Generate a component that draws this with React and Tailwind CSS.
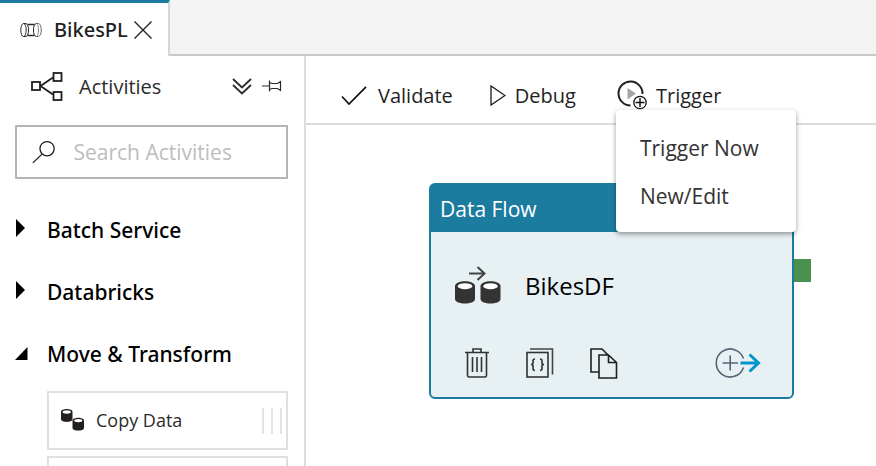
import React from "react";

function PipelineIcon() {
  return (
    <svg width="22" height="16" viewBox="0 0 22 16" fill="none" stroke="#2b2b2b">
      <ellipse cx="3.5" cy="8" rx="2.700" ry="6.500" />
      <path d="M3.500 1.500H6C8 2.500 8.500 5 8.500 8s-.5 5.500-2.500 6.500H3.500" />
      <path d="M7.500 2.500h7M7.500 13.500h7" strokeWidth="1.500" />
      <path d="M16 1.500c-2 1-2.500 3.500-2.500 6.500s.5 5.500 2.500 6.500" />
      <path d="M15.500 1.500h3c2 .5 2.800 3.500 2.800 6.500s-.8 6-2.800 6.500h-3" stroke="#666" />
      <path d="M16.500 1.500c1.500 1 2 3.500 2 6.500s-.5 5.500-2 6.500" stroke="#888" />
    </svg>
  );
}

function CloseIcon() {
  return (
    <svg width="18" height="18" viewBox="0 0 18 18" fill="none" stroke="#1f1f1f" strokeWidth="1.300">
      <path d="M.5.5l17 17M17.500.5l-17 17" />
    </svg>
  );
}

function ActivitiesIcon() {
  return (
    <svg width="32" height="30" viewBox="0 0 32 30" fill="none" stroke="#1f1f1f" strokeWidth="1.800">
      <rect x="1" y="10" width="8" height="8" />
      <rect x="22.500" y="1" width="8" height="8" />
      <rect x="22.500" y="20" width="8" height="8" />
      <path d="M22 5.500L9.500 14L22 22.500" />
    </svg>
  );
}

function CollapseIcon() {
  return (
    <svg width="20" height="18" viewBox="0 0 20 18" fill="none" stroke="#2b2b2b" strokeWidth="1.800">
      <path d="M1 1l9 8.500L19 1M1 7l9 8.500 9-8.500" />
    </svg>
  );
}

function PinIcon() {
  return (
    <svg width="20" height="14" viewBox="0 0 20 14" fill="none" stroke="#2b2b2b" strokeWidth="1.200">
      <path d="M0 6H7.500M7.500.5v11M7.500 2.500L10 3.500h5.500L18.500 1.500v9L15.500 8.500H10L7.500 9.500" />
    </svg>
  );
}

function SearchIcon() {
  return (
    <svg width="28" height="28" viewBox="0 0 28 28" fill="none" stroke="#1a1a1a" strokeWidth="1.500">
      <circle cx="18" cy="10" r="8.500" />
      <path d="M12 16.500L1 27" />
    </svg>
  );
}

function Cylinder({ x, y, fill }) {
  return (
    <g transform={`translate(${x} ${y})`}>
      <path d="M0 5C0-1.500 20-1.500 20 5V18c0 6-20 6-20 0z" fill={fill} />
      <ellipse cx="10" cy="5.200" rx="7.200" ry="3" fill="#fff" />
    </g>
  );
}

function CopyDataIcon() {
  return (
    <svg width="23" height="23" viewBox="0 0 40 40">
      <Cylinder x="0" y="0" fill="#231f20" />
      <Cylinder x="20" y="15" fill="#231f20" />
    </svg>
  );
}

function DataFlowIcon() {
  return (
    <svg width="46" height="40" viewBox="0 0 46 40">
      <path d="M14 7.500h16M22.500 1l7 6.500-7 6.500" fill="none" stroke="#444" strokeWidth="2" />
      <Cylinder x="0" y="15" fill="#333" />
      <Cylinder x="25.500" y="15" fill="#333" />
    </svg>
  );
}

function CheckIcon() {
  return (
    <svg width="26" height="20" viewBox="0 0 26 20" fill="none" stroke="#111" strokeWidth="1.700">
      <path d="M1 10.500l7 7.500L25 .8" />
    </svg>
  );
}

function PlayIcon() {
  return (
    <svg width="16" height="22" viewBox="0 0 16 22" fill="none" stroke="#1a1a1a" strokeWidth="1.300">
      <path d="M1 1v19L15 10.500z" />
    </svg>
  );
}

function TriggerIcon() {
  return (
    <svg width="32" height="32" viewBox="0 0 32 32" fill="none">
      <path d="M14.500 25.500A12 12 0 1 1 26.500 14" stroke="#222" strokeWidth="2" />
      <path d="M11.500 8v11.500l8.500-6z" fill="#a6a6a6" />
      <circle cx="24" cy="22.500" r="6.200" fill="#fff" stroke="#111" strokeWidth="1.300" />
      <path d="M19.500 22.500h9M24 18v9" stroke="#111" strokeWidth="1.400" />
    </svg>
  );
}

function TrashIcon() {
  return (
    <svg width="26" height="30" viewBox="0 0 26 30" fill="none" stroke="#333" strokeWidth="1.600">
      <path d="M1 4.500h24M9 4V1h8v3M3.500 5v22.500q0 1.500 1.500 1.500h16q1.500 0 1.500-1.500V5M8.500 9v15M13 9v15M17.500 9v15" />
    </svg>
  );
}

function CodeIcon() {
  return (
    <svg width="28" height="30" viewBox="0 0 28 30" fill="none" stroke="#333" strokeWidth="1.600">
      <rect x="1" y="4.500" width="21" height="24.500" />
      <path d="M4 1h22.500v25.500" stroke="#444" />
      <path d="M9 11q-2 0-2 2v2q0 1.500-2 1.500 2 0 2 1.500v2.500q0 2 2 2M14 11q2 0 2 2v2q0 1.500 2 1.500-2 0-2 1.500v2.500q0 2-2 2" />
    </svg>
  );
}

function CopyIcon() {
  return (
    <svg width="28" height="31" viewBox="0 0 28 31" fill="none" stroke="#1f1f1f" strokeWidth="1.600">
      <path d="M9 24H1V1h11l6 6M9 7h9.500l8 7.500V30H9zM18.500 7v7.500h8" />
    </svg>
  );
}

function AddOutputIcon() {
  return (
    <svg width="47" height="32" viewBox="0 0 47 32" fill="none">
      <path d="M28.500 11.500A14 14 0 1 0 28.500 20.500" stroke="#5b6376" strokeWidth="1.600" />
      <path d="M7.500 16H23M15.200 8.500v15" stroke="#5b6376" strokeWidth="1.600" />
      <path d="M25.500 16H44M34.500 7.500l9 8.500-9 8.500" stroke="#0095cb" strokeWidth="3" />
    </svg>
  );
}

function Group({ label, open, children }) {
  return (
    <section>
      <button
        type="button"
        aria-expanded={open}
        className="flex h-[62px] w-full items-center text-left font-['Noto_Sans',sans-serif] text-[21px] font-medium text-black"
      >
        <span className="flex h-6 w-8 items-start">
          {open ? (
            <svg width="13" height="19" viewBox="0 0 13 19">
              <path d="M12.500 4v13H0z" />
            </svg>
          ) : (
            <svg width="10" height="19" viewBox="0 0 10 19">
              <path d="M1 0v18l9-9z" />
            </svg>
          )}
        </span>
        {label}
      </button>
      {children}
    </section>
  );
}

function ToolButton({ icon, label, className }) {
  return (
    <button type="button" className={`flex items-center text-[20px] text-[#1f1f1f] ${className}`}>
      {icon}
      {label}
    </button>
  );
}

export default function App() {
  return (
    <div className="flex h-screen flex-col overflow-hidden bg-white font-['Open_Sans',sans-serif] text-[#2b2b2b]">
      <header className="flex h-14 shrink-0">
        <div className="flex w-[170px] shrink-0 items-center border-t-[3px] border-r-2 border-t-[#1b7ca0] border-r-[#d6d6d6] pl-5">
          <PipelineIcon />
          <span className="ml-3 font-['Noto_Sans',sans-serif] text-[20px] font-medium text-[#1f1f1f]">BikesPL</span>
          <button type="button" aria-label="Close tab" className="ml-1.5">
            <CloseIcon />
          </button>
        </div>
        <div className="grow border-b-2 border-[#c8c8c8] bg-[#f3f3f3]" />
      </header>

      <div className="flex min-h-0 grow">
        <aside className="w-[306px] shrink-0 overflow-hidden border-r-2 border-[#dcdcdc] pr-4 pl-[15px]">
          <div className="flex h-[69px] items-center pb-2 pl-4">
            <ActivitiesIcon />
            <h2 className="ml-4 grow text-[20px]">Activities</h2>
            <button type="button" aria-label="Collapse all">
              <CollapseIcon />
            </button>
            <button type="button" aria-label="Pin" className="mr-1.5 ml-2.5">
              <PinIcon />
            </button>
          </div>

          <label className="flex h-[54px] items-center border-2 border-[#b5b5b5] pl-[15px]">
            <SearchIcon />
            <input
              type="text"
              aria-label="Search Activities"
              placeholder="Search Activities"
              className="ml-[18px] w-full min-w-0 pt-0.5 text-[21px] outline-none placeholder:text-[#bdbdbd]"
            />
          </label>

          <div className="pt-[21px]">
            <Group label="Batch Service" />
            <Group label="Databricks" />
            <Group label="Move & Transform" open>
              <div className="mt-[5px] ml-8 flex flex-col gap-1.5">
                <div className="flex h-[59px] items-center border-2 border-[#e0e0e0] pr-1 pl-3 text-[18px]">
                  <CopyDataIcon />
                  <span className="ml-3 grow">Copy Data</span>
                  <span className="flex h-[26px] w-5 justify-between border-x-2 border-[#e3e3e3]">
                    <span className="mx-auto w-0.5 bg-[#e3e3e3]" />
                  </span>
                </div>
                <div className="h-[59px] border-2 border-[#e0e0e0]" />
              </div>
            </Group>
          </div>
        </aside>

        <main className="flex min-w-0 grow flex-col">
          <div className="flex h-[69px] shrink-0 items-center border-b-2 border-[#dcdcdc] pt-3 pl-[35px]">
            <ToolButton icon={<CheckIcon />} label="Validate" className="gap-[11px]" />
            <ToolButton icon={<PlayIcon />} label="Debug" className="ml-[37px] gap-[9px]" />
            <div className="relative ml-10">
              <ToolButton icon={<TriggerIcon />} label="Trigger" className="gap-2" />
              <div
                role="menu"
                className="absolute top-[30px] left-0 z-10 w-[180px] rounded-sm bg-white pt-[15px] pb-[11px] text-[21px] text-[#333] shadow-[0_2px_5px_rgba(0,0,0,0.4)]"
              >
                <button type="button" role="menuitem" className="flex h-12 w-full items-center pl-6">
                  Trigger Now
                </button>
                <button type="button" role="menuitem" className="flex h-12 w-full items-center pl-6">
                  New/Edit
                </button>
              </div>
            </div>
          </div>

          <div className="relative grow">
            <div className="absolute top-[58px] left-[123px] w-[365px] rounded-md border-2 border-[#1b7ca0] bg-[#e7f0f3] pb-2.5">
              <div className="flex h-[47px] items-center bg-[#1b7ca0] pt-0.5 pl-[9px] text-[21px] text-white">
                Data Flow
              </div>
              <div className="flex h-[107px] items-center pl-6 text-[24px] text-black">
                <DataFlowIcon />
                <span className="ml-6">BikesDF</span>
              </div>
              <div className="flex h-12 items-center pr-[30px] pl-[33px]">
                <button type="button" aria-label="Delete">
                  <TrashIcon />
                </button>
                <button type="button" aria-label="View code" className="ml-9">
                  <CodeIcon />
                </button>
                <button type="button" aria-label="Clone" className="ml-9">
                  <CopyIcon />
                </button>
                <button type="button" aria-label="Add output" className="ml-auto">
                  <AddOutputIcon />
                </button>
              </div>
              <span className="absolute top-[74px] left-full ml-0.5 h-[23px] w-[17px] bg-[#4a9150]" />
            </div>
          </div>
        </main>
      </div>
    </div>
  );
}
